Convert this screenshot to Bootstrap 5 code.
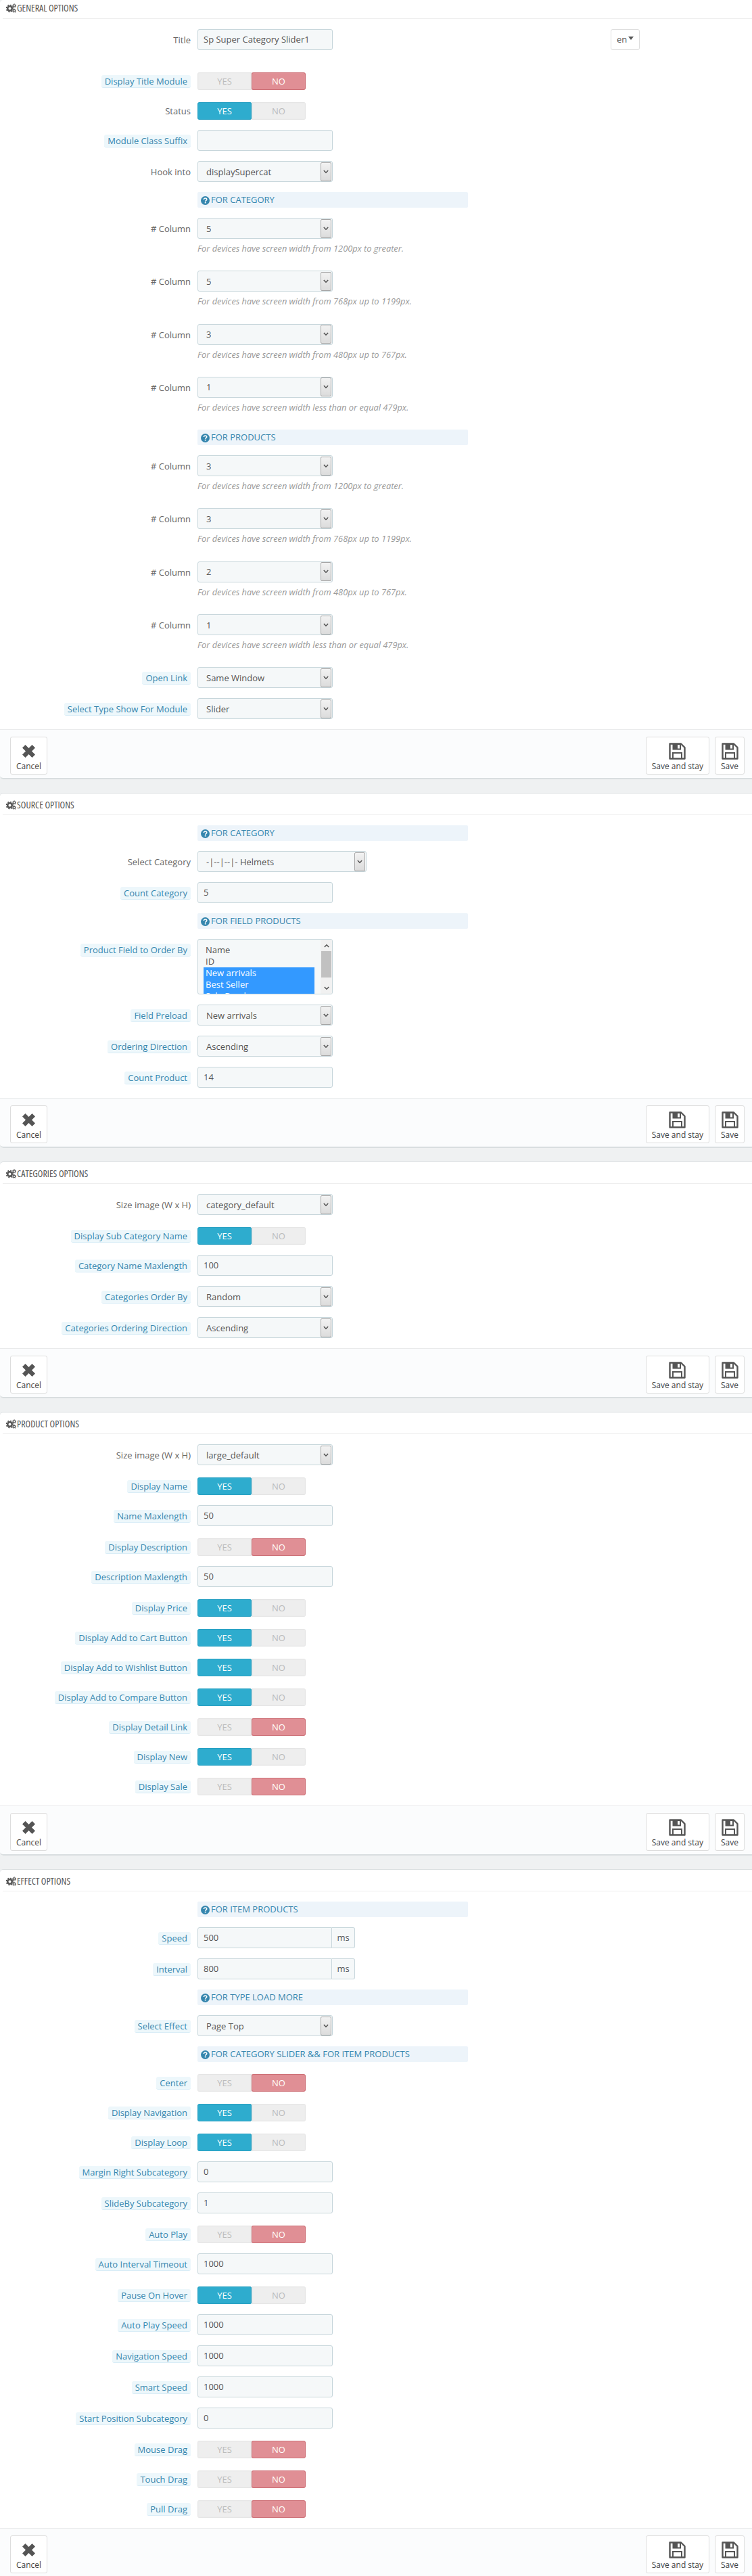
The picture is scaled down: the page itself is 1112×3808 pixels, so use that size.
<!DOCTYPE html>
<html lang="en">
<head>
  <meta charset="UTF-8" />
  <title>Sp Super Category Slider</title>
  <link href="https://cdn.jsdelivr.net/npm/bootstrap@5.3.3/dist/css/bootstrap.min.css" rel="stylesheet">
  <style>
    body { background: #eff1f2; font-family: "Open Sans", "Liberation Sans", sans-serif; font-size: 13px; color: #555; line-height: 18px; overflow: hidden; }
    .opt-panel { background: #fff; border-top: 1px solid #d9dee0; border-radius: 5px 0 0 5px; margin-bottom: 20px; }
    .opt-panel:first-of-type { border-top: 0; }
    .opt-panel:last-of-type { margin-bottom: 0; }
    .opt-head { height: 32px; margin-left: 4px; margin-bottom: 15px; padding-left: 5px; border-bottom: 1px solid #eee; font-size: 14px; text-transform: uppercase; color: #555; line-height: 33px; white-space: nowrap; }
    .opt-panel:first-of-type .opt-head { height: 28px; line-height: 24px; }
    .opt-head svg { width: 15px; height: 14px; vertical-align: -2px; margin-right: 1px; }
    .head-text { font-family: "Open Sans", sans-serif; font-stretch: 75%; }
    .opt-row { display: flex; margin-bottom: 15px; min-height: 31px; align-items: flex-start; }
    .opt-row.is-switch { min-height: 26px; padding-top: 3px; }
    .opt-row.after-title { margin-bottom: 30px; }
    .opt-name { width: 282px; flex: none; text-align: right; padding-top: 7px; margin-right: 10px; color: #666; }
    .is-switch .opt-name { padding-top: 4px; }
    .tip-name { display: inline-block; height: 19px; background: #edf7fb; border-bottom: 1px solid #d9edf7; border-radius: 3px; color: #3586ae; padding: 0 5px; }
    .opt-field { width: 200px; height: 31px; background: #f5f8f9; border: 1px solid #c7d6db; border-radius: 3px; color: #555; padding: 5px 8px; flex: none; }
    .opt-wide { width: 250px; }
    .opt-select { display: flex; padding: 0 1px 0 12px; align-items: center; justify-content: space-between; overflow: hidden; }
    .sel-arrow { width: 16px; height: 28px; background: linear-gradient(#f2f2f2, #dcdcdc); border: 1px solid #a5a5a5; border-radius: 2px; display: flex; align-items: center; justify-content: center; }
    .sel-arrow svg { width: 8px; height: 6px; }
    .opt-addon { width: 233px; display: flex; height: 31px; }
    .opt-addon .opt-field { width: 199px; border-radius: 3px 0 0 3px; }
    .addon-unit { flex: 1; background: #f5f8f9; border: 1px solid #c7d6db; border-left: 0; border-radius: 0 3px 3px 0; text-align: center; line-height: 29px; }
    .opt-help { color: #999; font-style: italic; font-size: 12.8px; margin-top: 5px; height: 21.3px; white-space: nowrap; }
    .opt-stack { flex: none; margin-bottom: 6px; }
    .yes-no { display: flex; width: 160px; height: 26px; border-radius: 3px; overflow: hidden; text-align: center; line-height: 26px; text-transform: uppercase; }
    .yes-no span { width: 80px; background: #eee; color: #bbb; box-shadow: inset 0 0 2px #ccc; }
    .yes-no .on-yes { background: #2eacce; color: #fff; box-shadow: inset 0 0 0 1px #28a0c2; border-radius: 3px; }
    .yes-no .on-no { background: #e08f95; color: #fff; box-shadow: inset 0 0 0 1px #cd6f76; border-radius: 3px; }
    .opt-note { width: 400px; height: 23px; margin-left: 292px; margin-bottom: 15px; background: #edf4fa; border-radius: 2px; color: #3586ae; padding-left: 5px; line-height: 23px; text-transform: uppercase; white-space: nowrap; }
    .opt-note svg { width: 13px; height: 13px; vertical-align: -2.5px; margin-right: 2px; }
    .opt-list { width: 200px; height: 82px; flex: none; background: #f5f8f9; border: 1px solid #c7d6db; border-radius: 3px; display: flex; overflow: hidden; padding: 7px 0 0 8px; line-height: 17px; }
    .list-items { width: 165px; color: #555; }
    .list-items div { padding-left: 3px; }
    .list-items .picked { background: #3399ff; color: #fff; }
    .list-bar { width: 17px; height: 80px; margin: -7px 0 0 9px; background: #f1f1f1; display: flex; flex-direction: column; align-items: center; }
    .list-bar i { width: 15px; height: 39px; background: #c1c1c1; display: block; flex: none; }
    .list-bar svg { width: 8px; height: 6px; flex: none; margin: 6px 0 5px; }
    .list-bar svg:last-child { margin-top: auto; }
    .opt-foot { height: 74px; background: #fbfcfd; border-top: 1px solid #e9eaeb; border-bottom: 2px solid #d9dee0; border-radius: 0 0 0 5px; padding: 10px 11px 0 15px; display: flex; justify-content: space-between; }
    .opt-panel:last-of-type .opt-foot { height: 74px; border-bottom: 0; }
    .foot-btn { height: 56px; padding: 8px 8px 0; background: #fff; border: 1px solid #ddd; border-radius: 3px; text-align: center; color: #444; line-height: 14px; font-size: 12px; }
    .foot-btn svg { display: block; width: 25px; height: 25px; margin: 0 auto 3px; }
    .lang-btn { width: 43px; height: 31px; margin-left: 411px; background: #fff; border: 1px solid #ddd; border-radius: 3px; line-height: 29px; padding-left: 8px; }
    .lang-btn::after { content: ""; display: inline-block; border: 4px solid transparent; border-top: 5px solid #555; border-bottom: 0; margin-left: 2px; vertical-align: 4px; }
  </style>
</head>
<body>
  <svg width="0" height="0" class="d-none">
    <defs>
      <symbol id="ico-cogs" viewBox="0 0 30 28">
        <circle cx="11" cy="15" r="6.5" fill="none" stroke="#555" stroke-width="5"/>
        <circle cx="11" cy="15" r="10" fill="none" stroke="#555" stroke-width="3.5" stroke-dasharray="4 3.85"/>
        <circle cx="24" cy="7" r="3.4" fill="none" stroke="#555" stroke-width="2.4"/>
        <circle cx="24" cy="7" r="5.4" fill="none" stroke="#555" stroke-width="1.8" stroke-dasharray="2 2.2"/>
        <circle cx="24" cy="22" r="3.4" fill="none" stroke="#555" stroke-width="2.4"/>
        <circle cx="24" cy="22" r="5.4" fill="none" stroke="#555" stroke-width="1.8" stroke-dasharray="2 2.2"/>
      </symbol>
      <symbol id="ico-help" viewBox="0 0 14 14">
        <circle cx="7" cy="7" r="7" fill="#3586ae"/>
        <path d="M4.7 5.4C4.8 4 5.8 3.2 7.1 3.2c1.4 0 2.3.8 2.3 1.9 0 1.7-2.2 1.6-2.2 3.3" fill="none" stroke="#fff" stroke-width="1.7"/>
        <rect x="6.2" y="9.4" width="2" height="1.9" fill="#fff"/>
      </symbol>
      <symbol id="ico-down" viewBox="0 0 8 6"><path d="M.8 1l3.2 3.2L7.2 1" fill="none" stroke="#555" stroke-width="1.6"/></symbol>
      <symbol id="ico-up" viewBox="0 0 8 6"><path d="M.8 5L4 1.8 7.2 5" fill="none" stroke="#555" stroke-width="1.6"/></symbol>
      <symbol id="ico-save" viewBox="0 0 25 25">
        <path d="M1.5 1.5H18L23.5 7V23.5H1.5Z" fill="none" stroke="#555" stroke-width="2.4" stroke-linejoin="round"/>
        <path d="M5.5 1.5H18V10.5H5.5Z" fill="#555"/>
        <rect x="13" y="3" width="3" height="5.500" fill="#fff"/>
        <path d="M6 23V15H19V23" fill="none" stroke="#555" stroke-width="2"/>
      </symbol>
      <symbol id="ico-cross" viewBox="-3 -3 25 25"><path d="M4.5 0L9.5 5 14.5 0 19 4.500 14 9.500 19 14.500 14.500 19 9.500 14 4.500 19 0 14.500 5 9.500 0 4.500Z" fill="#555"/></symbol>
    </defs>
  </svg>

  <section class="opt-panel">
    <div class="opt-head"><svg><use href="#ico-cogs"/></svg><span class="head-text">General options</span></div>
    <div class="opt-row after-title"><div class="opt-name">Title</div><div class="opt-field">Sp Super Category Slider1</div><div class="lang-btn">en</div></div>
    <div class="opt-row is-switch"><div class="opt-name"><span class="tip-name">Display Title Module</span></div><div class="yes-no"><span>Yes</span><span class="on-no">No</span></div></div>
    <div class="opt-row is-switch"><div class="opt-name">Status</div><div class="yes-no"><span class="on-yes">Yes</span><span>No</span></div></div>
    <div class="opt-row"><div class="opt-name"><span class="tip-name">Module Class Suffix</span></div><div class="opt-field"></div></div>
    <div class="opt-row"><div class="opt-name">Hook into</div><div class="opt-field opt-select">displaySupercat<span class="sel-arrow"><svg><use href="#ico-down"/></svg></span></div></div>
    <div class="opt-note"><svg><use href="#ico-help"/></svg>For Category</div>
    <div class="opt-row"><div class="opt-name"># Column</div><div class="opt-stack"><div class="opt-field opt-select">5<span class="sel-arrow"><svg><use href="#ico-down"/></svg></span></div><div class="opt-help">For devices have screen width from 1200px to greater.</div></div></div>
    <div class="opt-row"><div class="opt-name"># Column</div><div class="opt-stack"><div class="opt-field opt-select">5<span class="sel-arrow"><svg><use href="#ico-down"/></svg></span></div><div class="opt-help">For devices have screen width from 768px up to 1199px.</div></div></div>
    <div class="opt-row"><div class="opt-name"># Column</div><div class="opt-stack"><div class="opt-field opt-select">3<span class="sel-arrow"><svg><use href="#ico-down"/></svg></span></div><div class="opt-help">For devices have screen width from 480px up to 767px.</div></div></div>
    <div class="opt-row"><div class="opt-name"># Column</div><div class="opt-stack"><div class="opt-field opt-select">1<span class="sel-arrow"><svg><use href="#ico-down"/></svg></span></div><div class="opt-help">For devices have screen width less than or equal 479px.</div></div></div>
    <div class="opt-note"><svg><use href="#ico-help"/></svg>For Products</div>
    <div class="opt-row"><div class="opt-name"># Column</div><div class="opt-stack"><div class="opt-field opt-select">3<span class="sel-arrow"><svg><use href="#ico-down"/></svg></span></div><div class="opt-help">For devices have screen width from 1200px to greater.</div></div></div>
    <div class="opt-row"><div class="opt-name"># Column</div><div class="opt-stack"><div class="opt-field opt-select">3<span class="sel-arrow"><svg><use href="#ico-down"/></svg></span></div><div class="opt-help">For devices have screen width from 768px up to 1199px.</div></div></div>
    <div class="opt-row"><div class="opt-name"># Column</div><div class="opt-stack"><div class="opt-field opt-select">2<span class="sel-arrow"><svg><use href="#ico-down"/></svg></span></div><div class="opt-help">For devices have screen width from 480px up to 767px.</div></div></div>
    <div class="opt-row"><div class="opt-name"># Column</div><div class="opt-stack"><div class="opt-field opt-select">1<span class="sel-arrow"><svg><use href="#ico-down"/></svg></span></div><div class="opt-help">For devices have screen width less than or equal 479px.</div></div></div>
    <div class="opt-row"><div class="opt-name"><span class="tip-name">Open Link</span></div><div class="opt-field opt-select">Same Window<span class="sel-arrow"><svg><use href="#ico-down"/></svg></span></div></div>
    <div class="opt-row"><div class="opt-name"><span class="tip-name">Select Type Show For Module</span></div><div class="opt-field opt-select">Slider<span class="sel-arrow"><svg><use href="#ico-down"/></svg></span></div></div>
    <div class="opt-foot"><div class="foot-btn"><svg><use href="#ico-cross"/></svg>Cancel</div><div class="d-flex gap-2"><div class="foot-btn"><svg><use href="#ico-save"/></svg>Save and stay</div><div class="foot-btn"><svg><use href="#ico-save"/></svg>Save</div></div></div>
  </section>

  <section class="opt-panel">
    <div class="opt-head"><svg><use href="#ico-cogs"/></svg><span class="head-text">Source options</span></div>
    <div class="opt-note"><svg><use href="#ico-help"/></svg>For Category</div>
    <div class="opt-row"><div class="opt-name">Select Category</div><div class="opt-field opt-select opt-wide">-|--|--|- Helmets<span class="sel-arrow"><svg><use href="#ico-down"/></svg></span></div></div>
    <div class="opt-row"><div class="opt-name"><span class="tip-name">Count Category</span></div><div class="opt-field">5</div></div>
    <div class="opt-note"><svg><use href="#ico-help"/></svg>For Field Products</div>
    <div class="opt-row"><div class="opt-name"><span class="tip-name">Product Field to Order By</span></div><div class="opt-list"><div class="list-items"><div>Name</div><div>ID</div><div class="picked">New arrivals</div><div class="picked">Best Seller</div><div class="picked">Sale Break</div></div><div class="list-bar"><svg><use href="#ico-up"/></svg><i></i><svg><use href="#ico-down"/></svg></div></div></div>
    <div class="opt-row"><div class="opt-name"><span class="tip-name">Field Preload</span></div><div class="opt-field opt-select">New arrivals<span class="sel-arrow"><svg><use href="#ico-down"/></svg></span></div></div>
    <div class="opt-row"><div class="opt-name"><span class="tip-name">Ordering Direction</span></div><div class="opt-field opt-select">Ascending<span class="sel-arrow"><svg><use href="#ico-down"/></svg></span></div></div>
    <div class="opt-row"><div class="opt-name"><span class="tip-name">Count Product</span></div><div class="opt-field">14</div></div>
    <div class="opt-foot"><div class="foot-btn"><svg><use href="#ico-cross"/></svg>Cancel</div><div class="d-flex gap-2"><div class="foot-btn"><svg><use href="#ico-save"/></svg>Save and stay</div><div class="foot-btn"><svg><use href="#ico-save"/></svg>Save</div></div></div>
  </section>

  <section class="opt-panel">
    <div class="opt-head"><svg><use href="#ico-cogs"/></svg><span class="head-text">Categories options</span></div>
    <div class="opt-row"><div class="opt-name">Size image (W x H)</div><div class="opt-field opt-select">category_default<span class="sel-arrow"><svg><use href="#ico-down"/></svg></span></div></div>
    <div class="opt-row is-switch"><div class="opt-name"><span class="tip-name">Display Sub Category Name</span></div><div class="yes-no"><span class="on-yes">Yes</span><span>No</span></div></div>
    <div class="opt-row"><div class="opt-name"><span class="tip-name">Category Name Maxlength</span></div><div class="opt-field">100</div></div>
    <div class="opt-row"><div class="opt-name"><span class="tip-name">Categories Order By</span></div><div class="opt-field opt-select">Random<span class="sel-arrow"><svg><use href="#ico-down"/></svg></span></div></div>
    <div class="opt-row"><div class="opt-name"><span class="tip-name">Categories Ordering Direction</span></div><div class="opt-field opt-select">Ascending<span class="sel-arrow"><svg><use href="#ico-down"/></svg></span></div></div>
    <div class="opt-foot"><div class="foot-btn"><svg><use href="#ico-cross"/></svg>Cancel</div><div class="d-flex gap-2"><div class="foot-btn"><svg><use href="#ico-save"/></svg>Save and stay</div><div class="foot-btn"><svg><use href="#ico-save"/></svg>Save</div></div></div>
  </section>

  <section class="opt-panel">
    <div class="opt-head"><svg><use href="#ico-cogs"/></svg><span class="head-text">Product options</span></div>
    <div class="opt-row"><div class="opt-name">Size image (W x H)</div><div class="opt-field opt-select">large_default<span class="sel-arrow"><svg><use href="#ico-down"/></svg></span></div></div>
    <div class="opt-row is-switch"><div class="opt-name"><span class="tip-name">Display Name</span></div><div class="yes-no"><span class="on-yes">Yes</span><span>No</span></div></div>
    <div class="opt-row"><div class="opt-name"><span class="tip-name">Name Maxlength</span></div><div class="opt-field">50</div></div>
    <div class="opt-row is-switch"><div class="opt-name"><span class="tip-name">Display Description</span></div><div class="yes-no"><span>Yes</span><span class="on-no">No</span></div></div>
    <div class="opt-row"><div class="opt-name"><span class="tip-name">Description Maxlength</span></div><div class="opt-field">50</div></div>
    <div class="opt-row is-switch"><div class="opt-name"><span class="tip-name">Display Price</span></div><div class="yes-no"><span class="on-yes">Yes</span><span>No</span></div></div>
    <div class="opt-row is-switch"><div class="opt-name"><span class="tip-name">Display Add to Cart Button</span></div><div class="yes-no"><span class="on-yes">Yes</span><span>No</span></div></div>
    <div class="opt-row is-switch"><div class="opt-name"><span class="tip-name">Display Add to Wishlist Button</span></div><div class="yes-no"><span class="on-yes">Yes</span><span>No</span></div></div>
    <div class="opt-row is-switch"><div class="opt-name"><span class="tip-name">Display Add to Compare Button</span></div><div class="yes-no"><span class="on-yes">Yes</span><span>No</span></div></div>
    <div class="opt-row is-switch"><div class="opt-name"><span class="tip-name">Display Detail Link</span></div><div class="yes-no"><span>Yes</span><span class="on-no">No</span></div></div>
    <div class="opt-row is-switch"><div class="opt-name"><span class="tip-name">Display New</span></div><div class="yes-no"><span class="on-yes">Yes</span><span>No</span></div></div>
    <div class="opt-row is-switch"><div class="opt-name"><span class="tip-name">Display Sale</span></div><div class="yes-no"><span>Yes</span><span class="on-no">No</span></div></div>
    <div class="opt-foot"><div class="foot-btn"><svg><use href="#ico-cross"/></svg>Cancel</div><div class="d-flex gap-2"><div class="foot-btn"><svg><use href="#ico-save"/></svg>Save and stay</div><div class="foot-btn"><svg><use href="#ico-save"/></svg>Save</div></div></div>
  </section>

  <section class="opt-panel">
    <div class="opt-head"><svg><use href="#ico-cogs"/></svg><span class="head-text">Effect options</span></div>
    <div class="opt-note"><svg><use href="#ico-help"/></svg>For Item Products</div>
    <div class="opt-row"><div class="opt-name"><span class="tip-name">Speed</span></div><div class="opt-addon"><div class="opt-field">500</div><div class="addon-unit">ms</div></div></div>
    <div class="opt-row"><div class="opt-name"><span class="tip-name">Interval</span></div><div class="opt-addon"><div class="opt-field">800</div><div class="addon-unit">ms</div></div></div>
    <div class="opt-note"><svg><use href="#ico-help"/></svg>For Type Load More</div>
    <div class="opt-row"><div class="opt-name"><span class="tip-name">Select Effect</span></div><div class="opt-field opt-select">Page Top<span class="sel-arrow"><svg><use href="#ico-down"/></svg></span></div></div>
    <div class="opt-note"><svg><use href="#ico-help"/></svg>For Category Slider &amp;&amp; For Item Products</div>
    <div class="opt-row is-switch"><div class="opt-name"><span class="tip-name">Center</span></div><div class="yes-no"><span>Yes</span><span class="on-no">No</span></div></div>
    <div class="opt-row is-switch"><div class="opt-name"><span class="tip-name">Display Navigation</span></div><div class="yes-no"><span class="on-yes">Yes</span><span>No</span></div></div>
    <div class="opt-row is-switch"><div class="opt-name"><span class="tip-name">Display Loop</span></div><div class="yes-no"><span class="on-yes">Yes</span><span>No</span></div></div>
    <div class="opt-row"><div class="opt-name"><span class="tip-name">Margin Right Subcategory</span></div><div class="opt-field">0</div></div>
    <div class="opt-row"><div class="opt-name"><span class="tip-name">SlideBy Subcategory</span></div><div class="opt-field">1</div></div>
    <div class="opt-row is-switch"><div class="opt-name"><span class="tip-name">Auto Play</span></div><div class="yes-no"><span>Yes</span><span class="on-no">No</span></div></div>
    <div class="opt-row"><div class="opt-name"><span class="tip-name">Auto Interval Timeout</span></div><div class="opt-field">1000</div></div>
    <div class="opt-row is-switch"><div class="opt-name"><span class="tip-name">Pause On Hover</span></div><div class="yes-no"><span class="on-yes">Yes</span><span>No</span></div></div>
    <div class="opt-row"><div class="opt-name"><span class="tip-name">Auto Play Speed</span></div><div class="opt-field">1000</div></div>
    <div class="opt-row"><div class="opt-name"><span class="tip-name">Navigation Speed</span></div><div class="opt-field">1000</div></div>
    <div class="opt-row"><div class="opt-name"><span class="tip-name">Smart Speed</span></div><div class="opt-field">1000</div></div>
    <div class="opt-row"><div class="opt-name"><span class="tip-name">Start Position Subcategory</span></div><div class="opt-field">0</div></div>
    <div class="opt-row is-switch"><div class="opt-name"><span class="tip-name">Mouse Drag</span></div><div class="yes-no"><span>Yes</span><span class="on-no">No</span></div></div>
    <div class="opt-row is-switch"><div class="opt-name"><span class="tip-name">Touch Drag</span></div><div class="yes-no"><span>Yes</span><span class="on-no">No</span></div></div>
    <div class="opt-row is-switch"><div class="opt-name"><span class="tip-name">Pull Drag</span></div><div class="yes-no"><span>Yes</span><span class="on-no">No</span></div></div>
    <div class="opt-foot"><div class="foot-btn"><svg><use href="#ico-cross"/></svg>Cancel</div><div class="d-flex gap-2"><div class="foot-btn"><svg><use href="#ico-save"/></svg>Save and stay</div><div class="foot-btn"><svg><use href="#ico-save"/></svg>Save</div></div></div>
  </section>

  <script src="https://cdn.jsdelivr.net/npm/bootstrap@5.3.3/dist/js/bootstrap.bundle.min.js"></script>
</body>
</html>
